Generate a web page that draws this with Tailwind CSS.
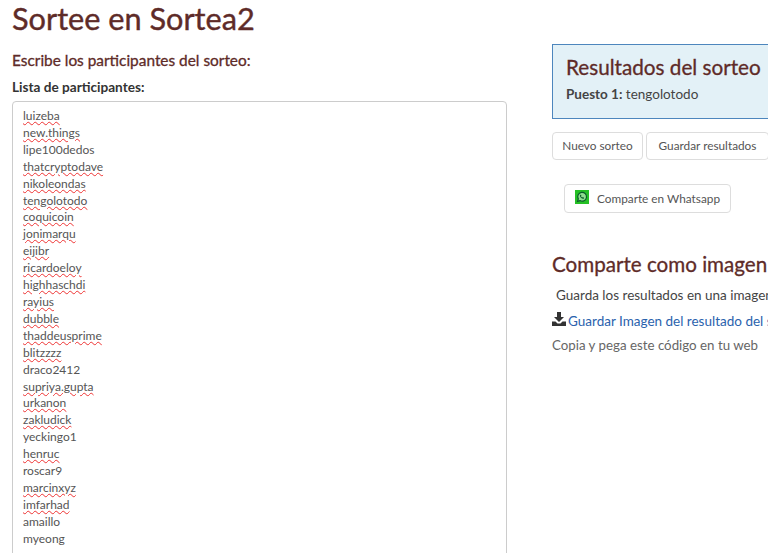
<html lang="es">
<head>
  <meta charset="utf-8"/>
  <meta content="width=device-width, initial-scale=1.0" name="viewport"/>
  <title>Sortee en Sortea2</title>
  <script src="https://cdn.jsdelivr.net/npm/@tailwindcss/browser@4"></script>
</head>
<body class="bg-white text-[#555] font-['Lato','Noto_Sans',sans-serif] w-[768px] h-[553px] overflow-hidden">
  <div class="flex w-[900px]">
    <!-- Left column -->
    <div class="w-[552px] shrink-0 pl-3">
      <h1 class="text-[30.7px] leading-[37px] text-[#5e2b28] [-webkit-text-stroke:0.4px_#5e2b28]">Sortee en Sortea2</h1>
      <h2 class="mt-[13px] text-[15.4px] leading-5 text-[#5e2b28] [-webkit-text-stroke:0.3px_#5e2b28]">Escribe los participantes del sorteo:</h2>
      <label class="block mt-[8px] text-[13.6px] leading-[18px] font-bold text-[#333]">Lista de participantes:</label>
      <div class="mt-[5px] w-[495px] h-[470px] pt-[6px] pl-[10px] border border-[#ccc] rounded text-[12px] leading-[16.9px] text-[#555]">
        <div><span class="underline decoration-wavy decoration-[#e33] decoration-[0.5px] underline-offset-1">luizeba</span></div>
        <div><span class="underline decoration-wavy decoration-[#e33] decoration-[0.5px] underline-offset-1">new.things</span></div>
        <div>lipe100dedos</div>
        <div><span class="underline decoration-wavy decoration-[#e33] decoration-[0.5px] underline-offset-1">thatcryptodave</span></div>
        <div><span class="underline decoration-wavy decoration-[#e33] decoration-[0.5px] underline-offset-1">nikoleondas</span></div>
        <div><span class="underline decoration-wavy decoration-[#e33] decoration-[0.5px] underline-offset-1">tengolotodo</span></div>
        <div><span class="underline decoration-wavy decoration-[#e33] decoration-[0.5px] underline-offset-1">coquicoin</span></div>
        <div><span class="underline decoration-wavy decoration-[#e33] decoration-[0.5px] underline-offset-1">jonimarqu</span></div>
        <div><span class="underline decoration-wavy decoration-[#e33] decoration-[0.5px] underline-offset-1">eijibr</span></div>
        <div><span class="underline decoration-wavy decoration-[#e33] decoration-[0.5px] underline-offset-1">ricardoeloy</span></div>
        <div><span class="underline decoration-wavy decoration-[#e33] decoration-[0.5px] underline-offset-1">highhaschdi</span></div>
        <div><span class="underline decoration-wavy decoration-[#e33] decoration-[0.5px] underline-offset-1">rayius</span></div>
        <div><span class="underline decoration-wavy decoration-[#e33] decoration-[0.5px] underline-offset-1">dubble</span></div>
        <div><span class="underline decoration-wavy decoration-[#e33] decoration-[0.5px] underline-offset-1">thaddeusprime</span></div>
        <div><span class="underline decoration-wavy decoration-[#e33] decoration-[0.5px] underline-offset-1">blitzzzz</span></div>
        <div>draco2412</div>
        <div><span class="underline decoration-wavy decoration-[#e33] decoration-[0.5px] underline-offset-1">supriya.gupta</span></div>
        <div><span class="underline decoration-wavy decoration-[#e33] decoration-[0.5px] underline-offset-1">urkanon</span></div>
        <div><span class="underline decoration-wavy decoration-[#e33] decoration-[0.5px] underline-offset-1">zakludick</span></div>
        <div>yeckingo1</div>
        <div><span class="underline decoration-wavy decoration-[#e33] decoration-[0.5px] underline-offset-1">henruc</span></div>
        <div>roscar9</div>
        <div><span class="underline decoration-wavy decoration-[#e33] decoration-[0.5px] underline-offset-1">marcinxyz</span></div>
        <div><span class="underline decoration-wavy decoration-[#e33] decoration-[0.5px] underline-offset-1">imfarhad</span></div>
        <div>amaillo</div>
        <div>myeong</div>
      </div>
    </div>
    <!-- Right column -->
    <div class="w-[348px] shrink-0 pt-[44px]">
      <div class="h-[75px] pt-[9px] pl-[13px] bg-[#e3f1f7] border border-[#4d86bd]">
        <h2 class="text-[20.7px] leading-[26px] text-[#5e2b28] [-webkit-text-stroke:0.3px_#5e2b28]">Resultados del sorteo</h2>
        <p class="mt-[5px] text-[13.5px] leading-[18px] text-[#444]"><b>Puesto 1:</b> tengolotodo</p>
      </div>
      <div class="mt-[13px] flex gap-[3px]">
        <button class="w-[91px] h-[28px] border border-[#ddd] rounded text-[11.8px] text-[#555]">Nuevo sorteo</button>
        <button class="w-[123px] h-[28px] border border-[#ddd] rounded text-[11.8px] text-[#555]">Guardar resultados</button>
      </div>
      <button class="mt-[24px] ml-3 w-[167px] h-[29px] flex items-center pl-[10px] gap-[8px] border border-[#ddd] rounded text-[11.8px] text-[#555]">
        <svg class="w-[14px] h-[14px] -mt-[3px]" viewBox="0 0 14 14">
          <rect width="14" height="14" fill="#25c025"/>
          <path d="M2.600 11.400l.7-2.500a4.400 4.400 0 1 1 1.700 1.700z" fill="#8fdc8f" stroke="#0a5c2a" stroke-width="1.200"/>
          <path d="M5.400 4.700c-.9.7-.3 2 .6 3s2.200 1.500 3 .8l-.2-.9-1-.5-.5.500c-.6-.2-1.100-.8-1.300-1.300l.4-.5-.4-1z" fill="#0a5c2a"/>
        </svg>
        Comparte en Whatsapp
      </button>
      <h2 class="mt-[38px] text-[20.6px] leading-[27px] text-[#5e2b28] [-webkit-text-stroke:0.3px_#5e2b28]">Comparte como imagen</h2>
      <p class="mt-[8px] pl-1 text-[13.500px] leading-[18px] text-[#444] whitespace-nowrap">Guarda los resultados en una imagen</p>
      <p class="mt-[8px] flex items-center gap-[2px] text-[13.500px] leading-[18px] text-[#2a62ad] whitespace-nowrap">
        <svg class="w-[14px] h-[14px] -mt-1" viewBox="0 0 14 14" fill="#333">
          <path d="M5 0h4v5h3L7 10 2 5h3z"/>
          <path d="M0 9.500h3.500L5.500 11.500h3L10.500 9.500H14V14H0z"/>
        </svg>
        Guardar Imagen del resultado del sorteo
      </p>
      <p class="mt-[6px] text-[13.300px] leading-[18px] text-[#666]">Copia y pega este código en tu web</p>
    </div>
  </div>
</body>
</html>
